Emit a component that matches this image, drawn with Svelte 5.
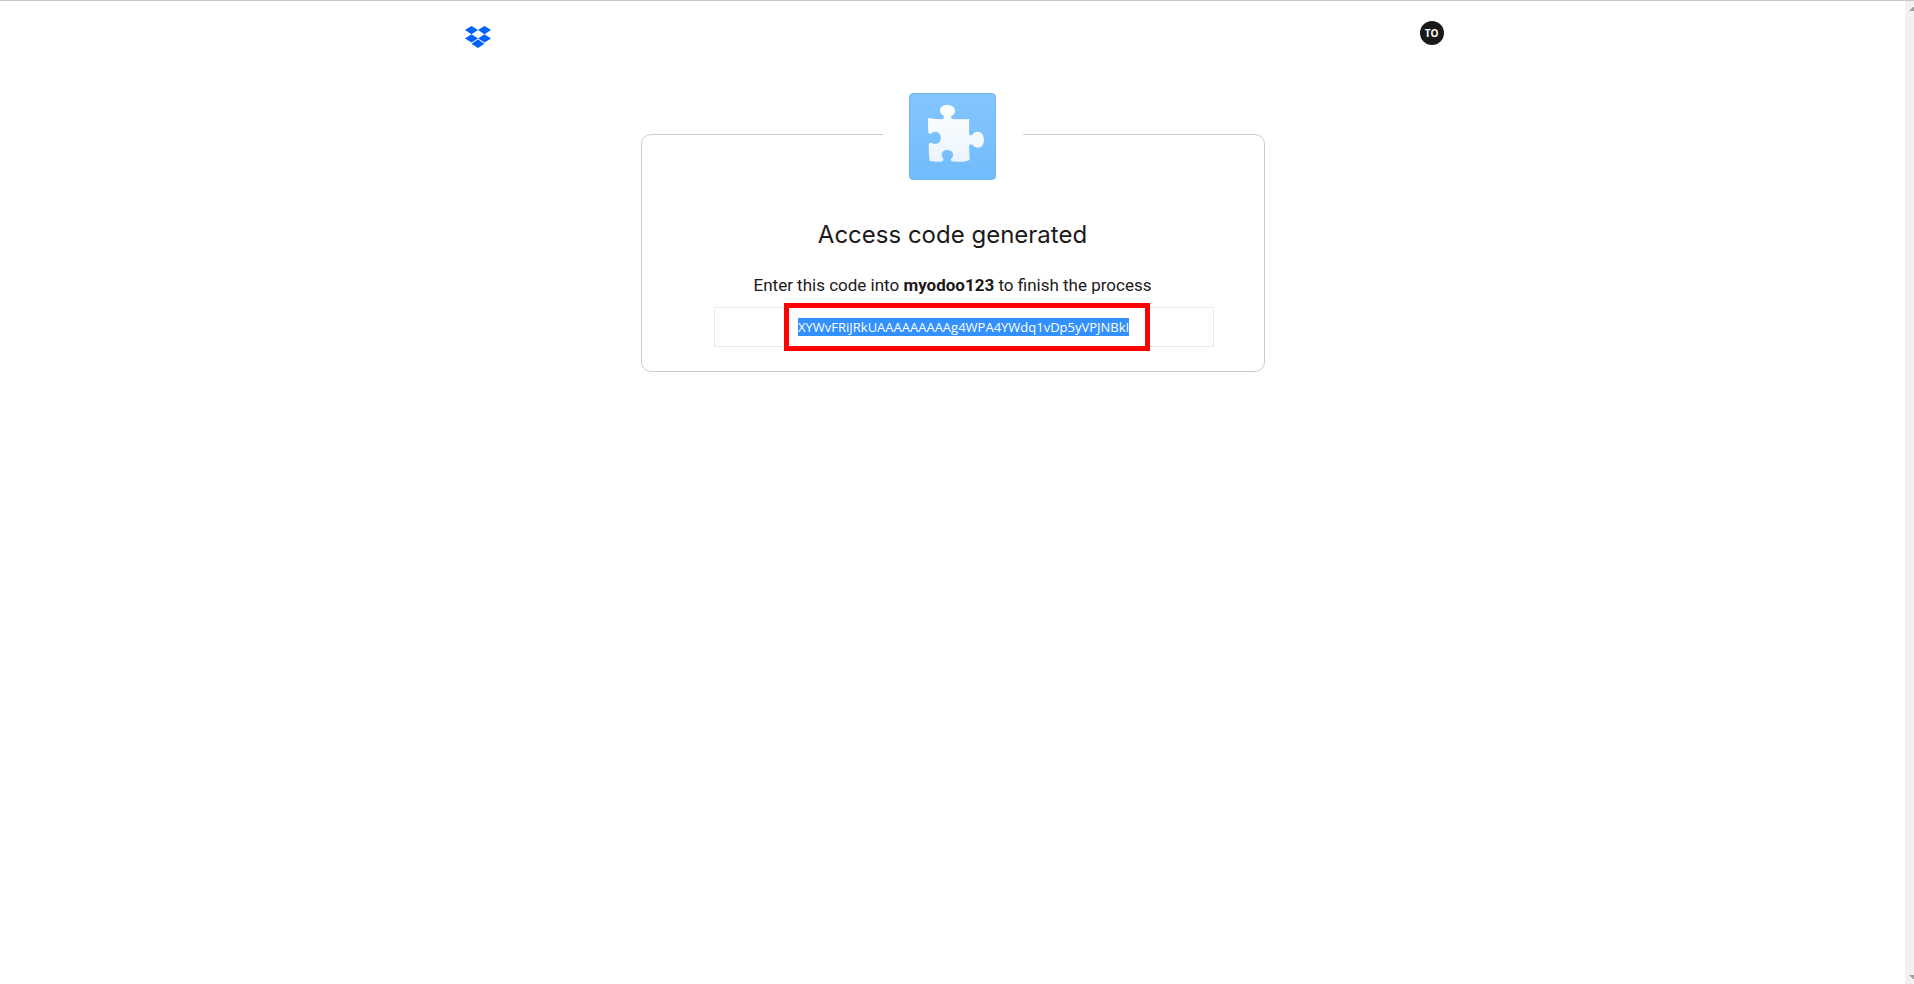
<script>
  const appName = 'myodoo123';
  const accessCode = 'XYWvFRiJRkUAAAAAAAAAg4WPA4YWdq1vDp5yVPJNBkI';
</script>

<div class="window">
  <div class="page">
    <header>
      <a class="logo" href="/" aria-label="Dropbox">
        <svg viewBox="0 0 26 22" width="26" height="22" aria-hidden="true">
          <path fill="#0061ff" d="M6.5 0 13 4.1 6.5 8.2 0 4.1ZM19.5 0 26 4.1 19.5 8.2 13 4.1ZM6.5 8.2 13 12.4 6.5 16.5 0 12.4ZM19.5 8.2 26 12.4 19.5 16.5 13 12.4ZM13 13.5 19.5 17.7 13 22 6.5 17.7Z" />
        </svg>
      </a>
      <button class="avatar" type="button">TO</button>
    </header>

    <main>
      <div class="badge">
        <svg viewBox="0 0 87 87" width="87" height="87" aria-hidden="true">
          <defs>
            <linearGradient id="tile" x1="0" y1="0" x2="0" y2="1">
              <stop offset="0" stop-color="#84c6ff" />
              <stop offset="1" stop-color="#71bcfb" />
            </linearGradient>
            <linearGradient id="piece" x1="0" y1="0" x2="0" y2="1">
              <stop offset="0" stop-color="#ffffff" />
              <stop offset="1" stop-color="#eaf4fd" />
            </linearGradient>
          </defs>
          <rect x=".5" y=".5" width="86" height="86" rx="3.5" fill="url(#tile)" stroke="#74b9f1" />
          <path
            fill="url(#piece)"
            d="M19 25C24 26 29 26.500 33 26C35.500 25.500 35.500 23.500 34 22.200C32 21 31 19.500 31 17.800C31 14 34 12 38.500 12C43 12 46 14.500 46 18C46 20 45 21.500 43 22.500C41.500 23.500 41.500 25.500 44 26C49 26.500 55 26.300 60.200 26L60 40C60 42.500 62 43.200 63.500 41.500C65 39.500 66.500 38.700 68.500 38.700C72.500 38.700 75 42 75 47C75 51.500 72.500 54.700 69 54.700C66.500 54.700 65 53.500 63.500 51.800C62 50.800 60 51 60 53.500L60.700 67C56 69 50 69 44 68.500C41.500 68 41.500 66 42.800 65C44 64 44.200 62.500 44 61C43.500 58.500 41 57 38 57C35 57 32.700 59 32.700 61.500C32.700 63 33.300 64.200 34 65C35 66.500 34.500 68.300 32.500 68.500C29 69 24.500 68.800 20.700 68C20 63 19.700 58 19.700 53C19.700 50.500 20.800 49.400 22.500 50C25 51.500 28 51.200 30 49.500C32.300 47 32.300 42.500 30.200 40.500C28 38.300 25 38.300 23 40C21 41.500 19.200 41 19.200 38.500Z"
          />
        </svg>
      </div>
      <h1>Access code generated</h1>
      <label for="code">Enter this code into <strong>{appName}</strong> to finish the process</label>
      <div class="field">
        <input id="code" type="text" readonly value={accessCode} />
        <div class="marker"></div>
      </div>
    </main>
  </div>

  <div class="scrollbar" aria-hidden="true">
    <svg viewBox="0 0 9 18" width="9" height="18"><path fill="#a0a0a0" d="M4 10 8 6H9V10Z" /></svg>
    <svg viewBox="0 0 9 18" width="9" height="18"><path fill="#a0a0a0" d="M4 9H9V13H8Z" /></svg>
  </div>
</div>

<style>
  :global(body) {
    margin: 0;
    background: #fff;
  }
  .window {
    box-sizing: border-box;
    display: flex;
    min-height: 100vh;
    border-top: 1px solid #c8c8c8;
    color: #1e1919;
    font-family: Roboto, sans-serif;
  }
  .page {
    flex: 1;
  }
  header {
    box-sizing: border-box;
    display: flex;
    justify-content: space-between;
    align-items: flex-start;
    max-width: 982px;
    height: 92px;
    margin: 0 auto;
    padding-top: 20px;
  }
  .logo {
    display: flex;
    padding: 5px 3px;
  }
  .avatar {
    width: 24px;
    height: 24px;
    padding: 0;
    border: 0;
    border-radius: 50%;
    background: #1a1918;
    color: #fff;
    font: 700 10px/24px "Open Sans", sans-serif;
  }
  main {
    box-sizing: border-box;
    display: flex;
    flex-direction: column;
    align-items: center;
    max-width: 624px;
    margin: 41px auto 0;
    padding: 0 24px 24px;
    border: 1px solid #ccc;
    border-radius: 10px;
  }
  .badge {
    display: flex;
    justify-content: center;
    width: 140px;
    margin-top: -42px;
    background: #fff;
  }
  h1 {
    margin: 39px 0 0;
    font: 400 24px/32px Inter, sans-serif;
  }
  label {
    margin-top: 22px;
    font-size: 17px;
    line-height: 24px;
  }
  .field {
    position: relative;
    box-sizing: border-box;
    display: flex;
    align-items: center;
    justify-content: center;
    width: 100%;
    max-width: 500px;
    height: 40px;
    margin: 10px 0 0 22px;
    border: 1px solid #ebebeb;
  }
  input {
    width: 331px;
    height: 18px;
    padding: 0;
    border: 0;
    outline: 0;
    background: #3390ff;
    color: #fff;
    font: 13px/18px "Open Sans", sans-serif;
  }
  .marker {
    position: absolute;
    inset: -5px 63px -5px 69px;
    border: 5px solid #f00;
    pointer-events: none;
  }
  .scrollbar {
    display: flex;
    flex-direction: column;
    justify-content: space-between;
    width: 9px;
    background: #f1f1f1;
  }
</style>
